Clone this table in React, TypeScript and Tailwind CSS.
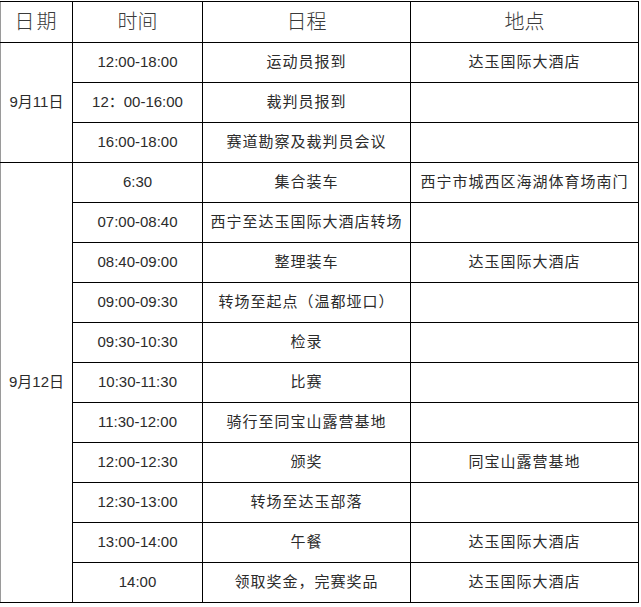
const rows = [
  { date: "9月11日", span: 3, time: "12:00-18:00", item: "运动员报到", place: "达玉国际大酒店" },
  { time: "12：00-16:00", item: "裁判员报到", place: "" },
  { time: "16:00-18:00", item: "赛道勘察及裁判员会议", place: "" },
  { date: "9月12日", span: 11, time: "6:30", item: "集合装车", place: "西宁市城西区海湖体育场南门" },
  { time: "07:00-08:40", item: "西宁至达玉国际大酒店转场", place: "" },
  { time: "08:40-09:00", item: "整理装车", place: "达玉国际大酒店" },
  { time: "09:00-09:30", item: "转场至起点（温都垭口）", place: "" },
  { time: "09:30-10:30", item: "检录", place: "" },
  { time: "10:30-11:30", item: "比赛", place: "" },
  { time: "11:30-12:00", item: "骑行至同宝山露营基地", place: "" },
  { time: "12:00-12:30", item: "颁奖", place: "同宝山露营基地" },
  { time: "12:30-13:00", item: "转场至达玉部落", place: "" },
  { time: "13:00-14:00", item: "午餐", place: "达玉国际大酒店" },
  { time: "14:00", item: "领取奖金，完赛奖品", place: "达玉国际大酒店" },
];

const font = { fontFamily: '"Liberation Sans", "Noto Sans CJK SC", sans-serif' };

export default function App() {
  return (
    <div className="w-[641px] h-[607px] bg-white pt-px" style={font}>
      <table className="w-[638px] table-fixed border-collapse text-[#2b2b2b]">
        <colgroup>
          <col className="w-[72px]" />
          <col className="w-[130px]" />
          <col className="w-[208px]" />
          <col className="w-[228px]" />
        </colgroup>
        <thead>
          <tr className="h-[41px] text-[20px] font-light text-[#3a3a3a]">
            <th className="border border-black border-l-[#9a9a9a] font-light tracking-[2px]">日期</th>
            <th className="border border-black font-light">时间</th>
            <th className="border border-black font-light">日程</th>
            <th className="border border-black font-light">地点</th>
          </tr>
        </thead>
        <tbody>
          {rows.map((r, i) => (
            <tr key={i} className="h-[40px]">
              {r.date && (
                <td rowSpan={r.span} className="border border-black border-l-[#9a9a9a] text-center text-[15px]">
                  {r.date}
                </td>
              )}
              <td className="border border-black text-center text-[15px]">{r.time}</td>
              <td className="border border-black text-center text-[15px] tracking-[1px]">{r.item}</td>
              <td className="border border-black text-center text-[15px] tracking-[1px]">{r.place}</td>
            </tr>
          ))}
        </tbody>
      </table>
    </div>
  );
}
